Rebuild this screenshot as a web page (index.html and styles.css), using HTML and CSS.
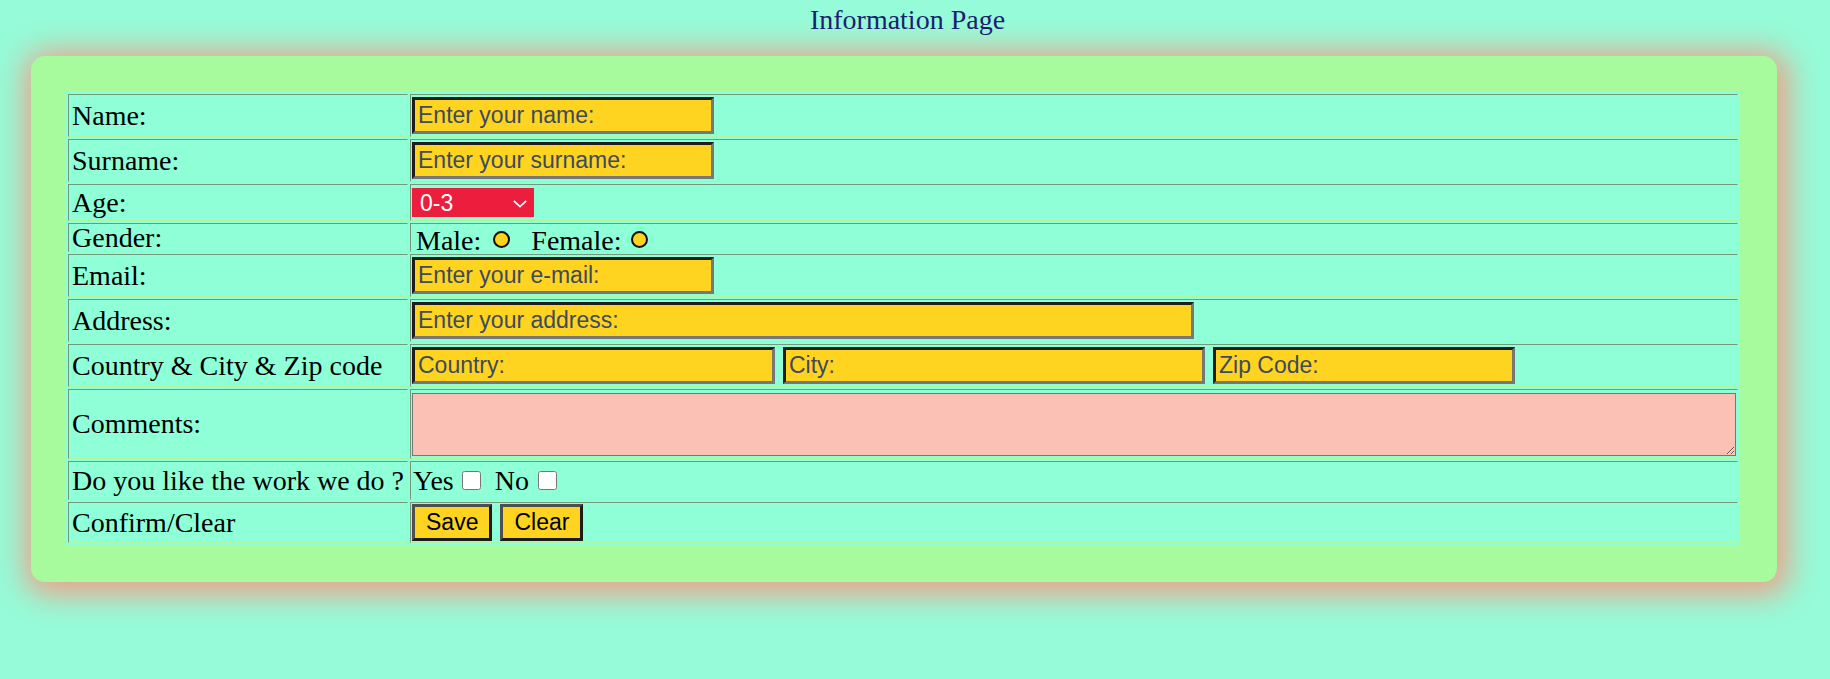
FILE: index.html
```html
<!DOCTYPE html>
<html lang="en">
<head>
<meta charset="utf-8">
<title>Information Page</title>
<link rel="stylesheet" href="styles.css">
</head>
<body>
<div class="page">
  <h1 class="title">Information Page</h1>
  <div class="card">
    <table class="form">
      <colgroup><col class="col-label"><col class="col-value"></colgroup>
      <tr>
        <td>Name:</td>
        <td><div class="v h39"><input class="f w302" type="text" placeholder="Enter your name:"></div></td>
      </tr>
      <tr>
        <td>Surname:</td>
        <td><div class="v h39"><input class="f w302" type="text" placeholder="Enter your surname:"></div></td>
      </tr>
      <tr>
        <td>Age:</td>
        <td><div class="v h33">
          <span class="sel">
            <select class="age"><option>0-3</option><option>4-12</option><option>13-18</option><option>19+</option></select>
            <svg class="chev" width="14" height="8" viewBox="0 0 14 8"><polyline points="0.8,0.8 7,6.6 13.2,0.8" fill="none" stroke="#fff" stroke-width="1.7"/></svg>
          </span>
        </div></td>
      </tr>
      <tr class="r-gender">
        <td>Gender:</td>
        <td><div class="v h25 gender">
          <span class="t t-male">Male:</span><input class="radio r1" type="radio" name="g">
          <span class="t t-female">Female:</span><input class="radio r2" type="radio" name="g">
        </div></td>
      </tr>
      <tr>
        <td>Email:</td>
        <td><div class="v h39"><input class="f w302" type="text" placeholder="Enter your e-mail:"></div></td>
      </tr>
      <tr>
        <td>Address:</td>
        <td><div class="v h39"><input class="f w782" type="text" placeholder="Enter your address:"></div></td>
      </tr>
      <tr>
        <td>Country &amp; City &amp; Zip code</td>
        <td><div class="v h39 row-gap">
          <input class="f w363" type="text" placeholder="Country:">
          <input class="f w422" type="text" placeholder="City:">
          <input class="f w302" type="text" placeholder="Zip Code:">
        </div></td>
      </tr>
      <tr>
        <td>Comments:</td>
        <td><div class="v h66"><textarea class="comments"></textarea></div></td>
      </tr>
      <tr>
        <td>Do you like the work we do ?</td>
        <td><div class="v h35 likes">
          <span class="t t-yes">Yes</span><input class="check c1" type="checkbox">
          <span class="t t-no">No</span><input class="check c2" type="checkbox">
        </div></td>
      </tr>
      <tr>
        <td>Confirm/Clear</td>
        <td><div class="v h37 row-gap">
          <button class="btn" type="button">Save</button>
          <button class="btn" type="button">Clear</button>
        </div></td>
      </tr>
    </table>
  </div>
</div>
</body>
</html>
```
FILE: styles.css
```css
html, body {
  margin: 0;
  padding: 0;
  background: #95fbd8;
}
body {
  font-family: "Liberation Serif", "Times New Roman", serif;
  font-size: 28px;
  color: #000;
  height: 679px;
  overflow: hidden;
}
.page {
  padding: 4px 53px 0 31px;
}
.title {
  margin: 0 0 20px;
  padding-left: 7px;
  font-size: 28px;
  font-weight: normal;
  line-height: 32px;
  text-align: center;
  color: #1b1f72;
}
.card {
  background: #a8fb9d;
  border-radius: 14px;
  padding: 36px 37px 37px 35px;
  box-shadow: 3px 4px 30px 9px #eea28a;
}
.form {
  width: 100%;
  table-layout: fixed;
  border-collapse: separate;
  border-spacing: 2px;
  background: #8effd6;
}
.col-label { width: 340px; }
.form td {
  padding: 1px;
  border: 1px solid;
  border-color: #72997a #aaf6a3 #aaf6a3 #72997a;
  vertical-align: middle;
  white-space: nowrap;
  line-height: normal;
}
.form td:first-child { padding-left: 3px; padding-right: 0; }
.r-gender td { line-height: 25px; }
.v {
  display: flex;
  align-items: center;
}
.h39 { height: 39px; }
.h33 { height: 33px; }
.h25 { height: 25px; }
.h66 { height: 66px; }
.h35 { height: 35px; }
.h37 { height: 37px; }
.row-gap { gap: 8px; }

.f {
  box-sizing: border-box;
  height: 37px;
  margin: 0;
  padding: 0 3px;
  border: 3px solid;
  border-color: #1e1e1e #777 #777 #1e1e1e;
  background: #fed420;
  font-family: "Liberation Sans", Arial, sans-serif;
  font-size: 23px;
  color: #222;
  outline: none;
}
.f::placeholder { color: #3e4a5e; opacity: 1; }
.w302 { width: 302px; }
.w363 { width: 363px; }
.w422 { width: 422px; }
.w782 { width: 782px; }

.sel {
  position: relative;
  display: inline-flex;
}
.age {
  appearance: none;
  -webkit-appearance: none;
  box-sizing: border-box;
  width: 122px;
  height: 29px;
  margin: 0;
  padding: 0 0 0 8px;
  border: 0;
  border-radius: 0;
  background: #ec1e3d;
  color: #fff;
  font-family: "Liberation Sans", Arial, sans-serif;
  font-size: 23px;
  outline: none;
}
.chev {
  position: absolute;
  left: 101px;
  top: 12px;
  pointer-events: none;
}

.gender .t { margin-top: 6px; line-height: 25px; }
.t-male { margin-left: 4px; }
.t-female { margin-left: 21px; }
.radio {
  appearance: none;
  -webkit-appearance: none;
  box-sizing: border-box;
  width: 17px;
  height: 17px;
  margin: 3px 0 0;
  border: 2px solid #111;
  border-radius: 50%;
  background: #fdd31f;
}
.r1 { margin-left: 12px; }
.r2 { margin-left: 9px; }

.likes .t { line-height: 32px; }
.t-yes { margin-left: 1px; }
.t-no { margin-left: 14px; }
.check {
  width: 19px;
  height: 19px;
  margin: 0;
}
.c1 { margin-left: 8px; }
.c2 { margin-left: 9px; }

.comments {
  display: block;
  box-sizing: border-box;
  width: 100%;
  height: 63px;
  margin: 0;
  border: 1px solid #767676;
  background: #fbc1b5;
  font-family: "Liberation Sans", Arial, sans-serif;
  font-size: 16px;
}

.btn {
  box-sizing: border-box;
  height: 37px;
  margin: 0;
  padding: 0 11px;
  border: 3px solid;
  border-color: #4f4f4f #1b1b1b #1b1b1b #4f4f4f;
  background: #fed420;
  color: #000;
  font-family: "Liberation Sans", Arial, sans-serif;
  font-size: 23px;
  cursor: pointer;
}
```
